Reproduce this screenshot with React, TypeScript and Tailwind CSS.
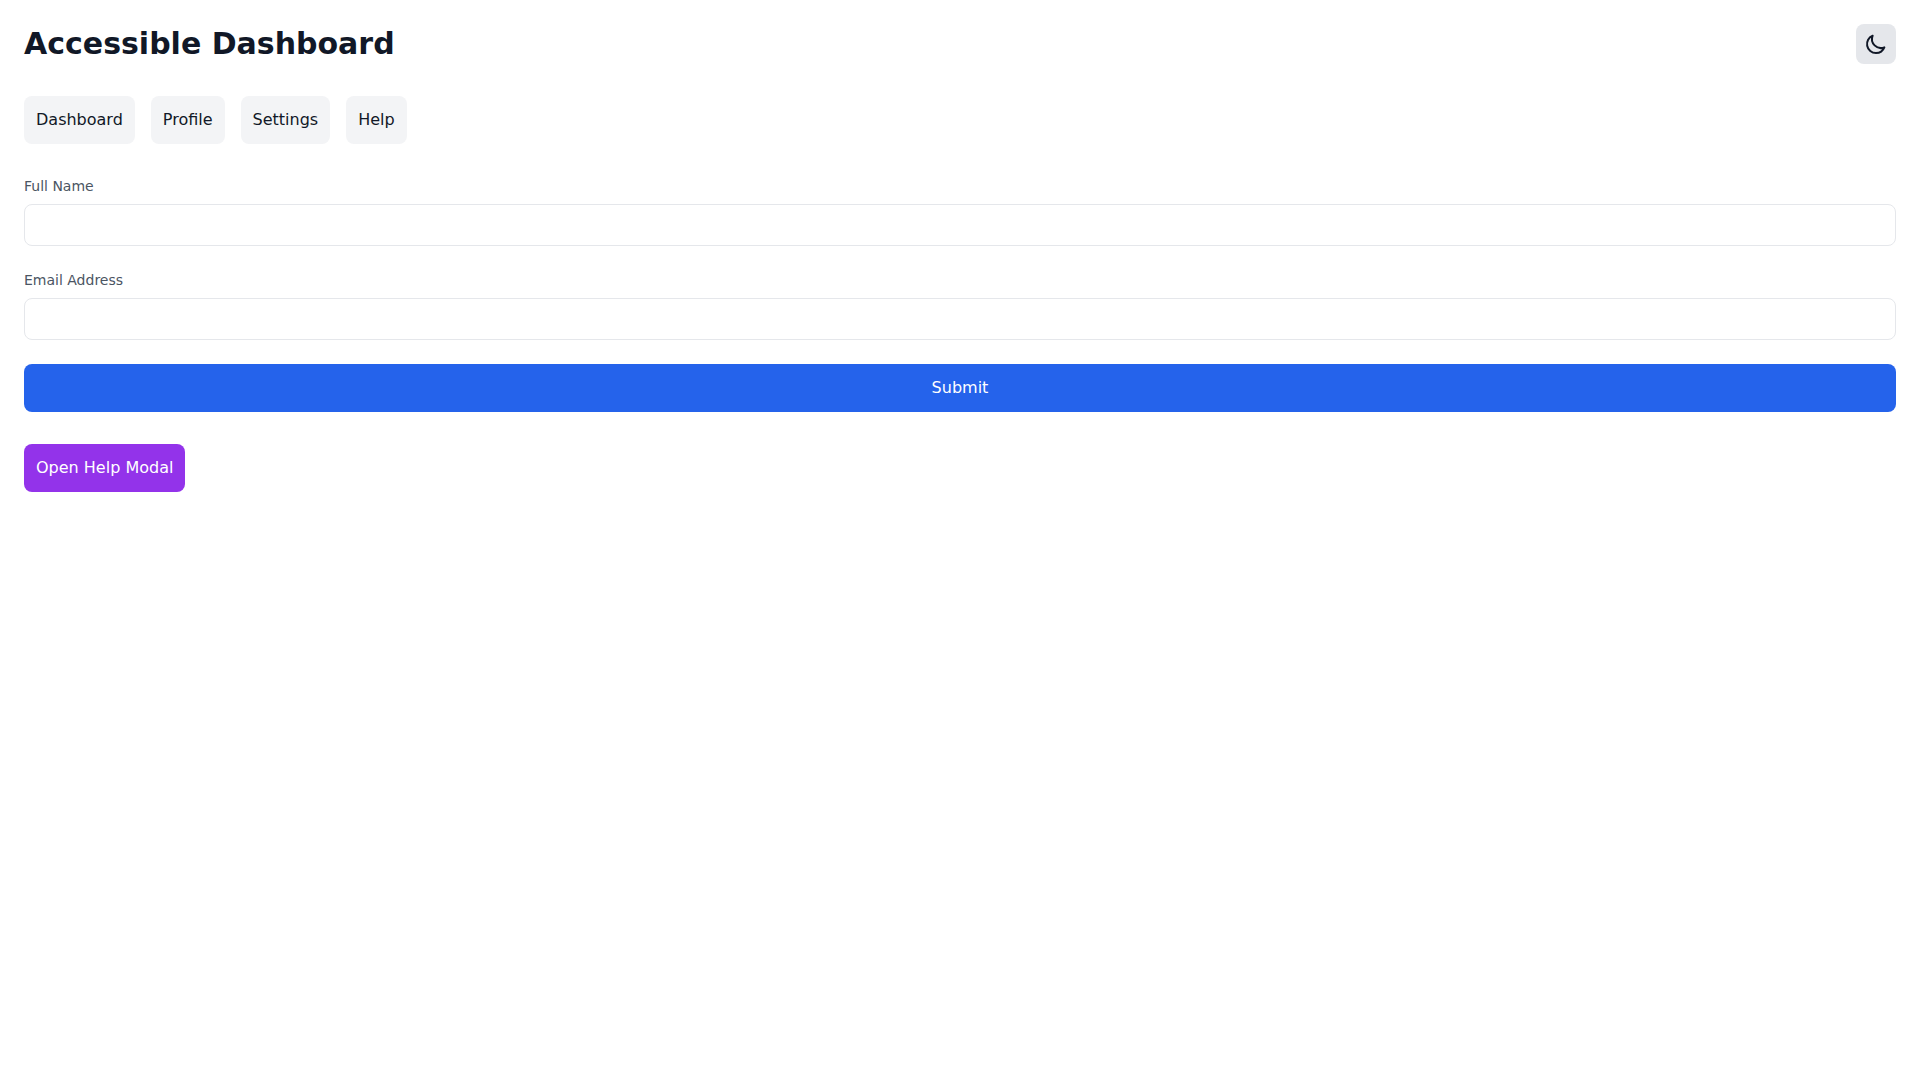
import React from 'react';

const font = { fontFamily: '"DejaVu Sans", sans-serif' };

const NavButton = ({ label }: { label: string }) => (
  <button className="px-3 py-3 text-base text-[#111827] bg-[#f3f4f6] rounded-lg">{label}</button>
);

const Field = ({ label, type }: { label: string; type: string }) => (
  <div className="mb-6">
    <label className="block mb-2 text-sm text-[#4b5563]">{label}</label>
    <input type={type} className="block w-full h-[42px] px-3 py-2 bg-white border border-[#e5e7eb] rounded-lg" />
  </div>
);

export default function App() {
  return (
    <div className="min-h-screen bg-white p-6" style={font}>
      <header className="flex items-center justify-between mb-8">
        <h1 className="text-3xl font-bold text-[#111827]">Accessible Dashboard</h1>
        <button className="p-2 bg-[#e5e7eb] rounded-lg text-[#111827]" aria-label="Toggle theme">
          <svg className="w-6 h-6" viewBox="0 0 24 24" fill="none" stroke="currentColor" strokeWidth="2" strokeLinecap="round" strokeLinejoin="round">
            <path d="M20.354 15.354A9 9 0 0 1 8.646 3.646 9.003 9.003 0 0 0 12 21a9.003 9.003 0 0 0 8.354-5.646z" />
          </svg>
        </button>
      </header>
      <nav className="flex gap-4 mb-8">
        <NavButton label="Dashboard" />
        <NavButton label="Profile" />
        <NavButton label="Settings" />
        <NavButton label="Help" />
      </nav>
      <form className="mb-8">
        <Field label="Full Name" type="text" />
        <Field label="Email Address" type="email" />
        <button type="button" className="w-full px-3 py-3 text-base text-white bg-[#2563eb] rounded-lg">Submit</button>
      </form>
      <button className="px-3 py-3 text-base text-white bg-[#9333ea] rounded-lg">Open Help Modal</button>
    </div>
  );
}
